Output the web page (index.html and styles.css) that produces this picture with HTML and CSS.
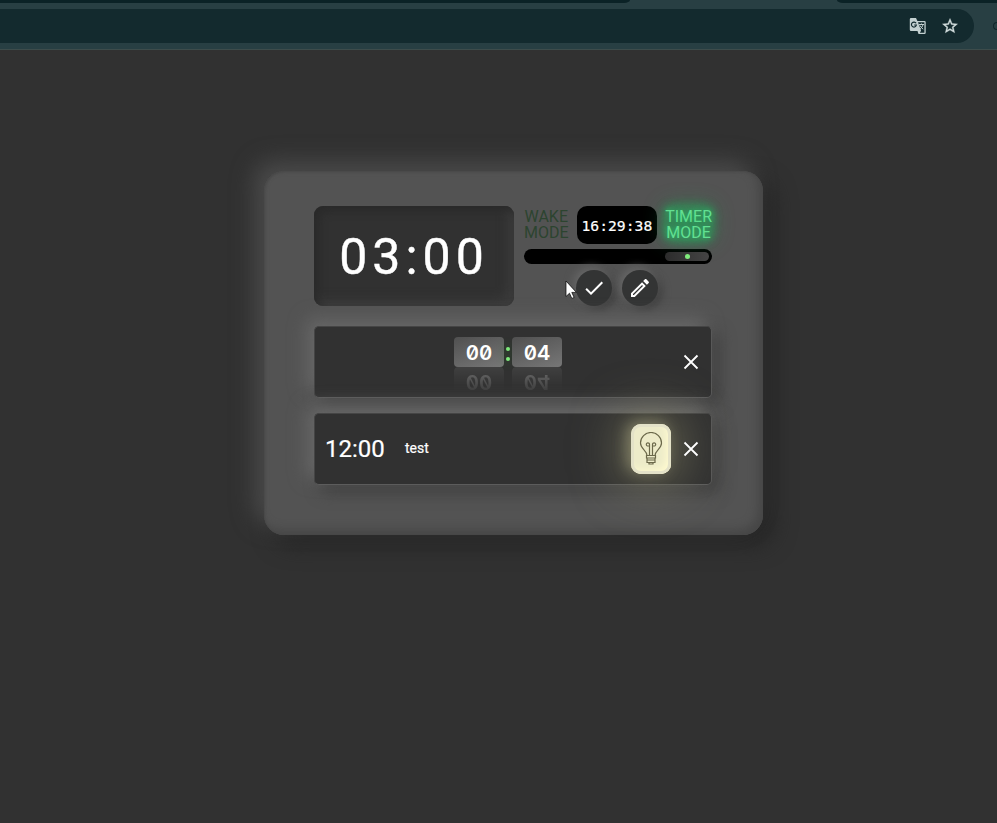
FILE: index.html
```html
<!DOCTYPE html>
<html lang="en">
<head>
<meta charset="utf-8">
<title>Timer</title>
<link rel="stylesheet" href="styles.css">
</head>
<body>
<header class="browser">
  <div class="tabs"><span class="tab-left"></span><span class="tab-gap"></span><span class="tab-right"></span></div>
  <div class="toolbar">
    <div class="omnibox">
      <svg class="ic-translate" viewBox="0 0 18 18"><path d="M1 1h6l1.400 3H15.500a1.200 1.200 0 0 1 1.200 1.200v10.600a1.200 1.200 0 0 1-1.200 1.200H9.500L8.500 14H2a1.200 1.200 0 0 1-1.200-1.200V2.200A1.200 1.200 0 0 1 2 1z" fill="#c3d0d0"/><path d="M9 5.300h6.400v10.400h-4.600l1.300-1.900z" fill="#132a2e"/><path d="M7.100 6.300A2.500 2.500 0 1 0 7.400 8H5.200" fill="none" stroke="#132a2e" stroke-width="1.200"/><path d="M10 7.500h5M12.500 6.500v1M14 7.500c-.4 2-1.600 3.500-3 4.700M11 8.500c.8 1.500 1.800 2.800 3.200 3.700" fill="none" stroke="#c3d0d0"/></svg>
      <svg class="ic-star" viewBox="0 0 24 24"><path d="M22 9.240l-7.190-.62L12 2 9.190 8.630 2 9.240l5.460 4.730L5.820 21 12 17.270 18.180 21l-1.630-7.030L22 9.240zM12 15.400l-3.760 2.270 1-4.280-3.320-2.880 4.380-.38L12 6.100l1.710 4.040 4.380.38-3.320 2.880 1 4.280L12 15.400z" fill="#d2dddd" stroke="#d2dddd" stroke-width=".5"/></svg>
    </div>
    <span class="edge-icon"></span>
  </div>
</header>
<main class="panel">
  <section class="top">
    <div class="display">03:00</div>
    <div class="controls">
      <div class="modes">
        <div class="mode wake">WAKE<br>MODE</div>
        <div class="clock">16:29:38</div>
        <div class="mode timer">TIMER<br>MODE</div>
      </div>
      <div class="slider"><div class="thumb"><i></i></div></div>
      <div class="actions">
        <button class="round" aria-label="Confirm"><svg viewBox="0 0 24 24"><path d="M9 16.170 4.830 12l-1.420 1.410L9 19 21 7l-1.410-1.410z"/></svg></button>
        <button class="round" aria-label="Edit"><svg viewBox="0 0 24 24"><path d="M14.060 9.020l.92.920L5.920 19H5v-.920l9.060-9.060M17.660 3c-.250 0-.510.100-.700.290l-1.830 1.830 3.750 3.750 1.830-1.830c.390-.390.390-1.020 0-1.410l-2.340-2.340c-.200-.200-.450-.290-.710-.290zm-3.600 3.190L3 17.250V21h3.750L17.810 9.940l-3.750-3.750z"/></svg></button>
      </div>
    </div>
  </section>
  <section class="row countdown">
    <div class="flip">
      <div class="unit"><div class="digits">00</div><div class="mirror" aria-hidden="true">00</div></div>
      <div class="colon"><i></i><i></i></div>
      <div class="unit"><div class="digits">04</div><div class="mirror" aria-hidden="true">04</div></div>
    </div>
    <button class="close" aria-label="Remove"><svg viewBox="0 0 16 16"><path d="M1.500 1.500l13 13M14.500 1.500l-13 13"/></svg></button>
  </section>
  <section class="row alarm">
    <span class="time">12:00</span><span class="label">test</span>
    <button class="lamp" aria-label="Toggle"><svg viewBox="0 0 24 34"><path d="M8 23.500C8 18.500 1.500 17 1.500 11a10.500 10.500 0 0 1 21 0c0 6-6.500 7.500-6.500 12.500zM10.500 23V12.500M13.500 23V12.500M10.500 14H9a1.600 1.600 0 1 1 1.500-1.600M13.500 14H15a1.600 1.600 0 1 0-1.500-1.600M7.500 23.500h9v2.500h-9zM8 26h8v4.500H8zM8 28h8M10 30.500v1.500h4v-1.500"/></svg></button>
    <button class="close" aria-label="Remove"><svg viewBox="0 0 16 16"><path d="M1.500 1.500l13 13M14.500 1.500l-13 13"/></svg></button>
  </section>
  <svg class="cursor" viewBox="0 0 12 19"><path d="M1 1v15.500l3.500-3.300 2.300 5.200 2.300-1-2.300-5h4.600z" fill="#fff" stroke="#000" stroke-width=".7"/></svg>
</main>
</body>
</html>
```
FILE: styles.css
```css
* { box-sizing: border-box; }
body { margin: 0; height: 823px; overflow: hidden; background: #313131; font-family: Roboto, sans-serif; color: #fff; }
button { border: 0; padding: 0; display: grid; place-items: center; }
svg { display: block; }
.browser { height: 50px; background: #283f43; border-bottom: 1px solid #3d4c4b; }
.tabs { display: flex; height: 3px; }
.tab-left, .tab-right { background: #0b2226; }
.tab-left { width: 630px; border-bottom-right-radius: 6px 3px; }
.tab-gap { width: 207px; }
.tab-right { flex: 1; border-bottom-left-radius: 6px 3px; }
.toolbar { display: flex; align-items: center; justify-content: space-between; padding-top: 6px; height: 40px; overflow: hidden; }
.omnibox { display: flex; align-items: center; justify-content: flex-end; gap: 14px; width: 974px; height: 34px; padding-right: 15px; background: #132a2e; border-radius: 0 17px 17px 0; }
.ic-translate { width: 18px; height: 18px; }
.ic-star { width: 18px; height: 18px; }
.edge-icon { width: 4px; height: 8px; border: 1px solid #10262a; border-right: 0; border-radius: 4px 0 0 4px; }
.panel { position: relative; width: 499px; height: 364px; margin: 121px 0 0 264px; padding: 35px 50px; border-radius: 20px; background: #535353; box-shadow: -10px -10px 22px #4a4a4a, 10px 10px 22px #252525, inset -5px -5px 10px #464646, inset 1px 1px 2px #494949; }
.top { display: flex; gap: 10px; height: 100px; }
.display { width: 200px; height: 100px; border-radius: 9px; background: #313131; box-shadow: inset 4px 4px 10px #292929, inset -5px -5px 12px #3e3e3e; font-size: 50px; line-height: 103px; letter-spacing: 5px; text-align: center; -webkit-text-stroke: .4px #fff; }
.controls { width: 188px; }
.modes { display: flex; justify-content: space-between; height: 38px; }
.mode { font-size: 16px; line-height: 16px; text-align: center; padding-top: 3px; white-space: nowrap; }
.wake { color: #2c442f; }
.timer { height: 34px; border-radius: 8px; background: #27a75b66; box-shadow: 0 0 8px 2px #27a75b66, 0 0 22px #27a75b77; color: #62e092; text-shadow: 0 0 5px #27b767, 0 0 11px #27b767; }
.clock { width: 80px; height: 38px; border-radius: 10px; background: #000; font: 14.700px/39px "DejaVu Sans Mono", monospace; -webkit-text-stroke: .2px #fff; text-align: center; }
.slider { display: flex; justify-content: flex-end; width: 188px; height: 15px; margin-top: 5px; padding: 3px; border-radius: 8px; background: #000; }
.thumb { display: grid; place-items: center; width: 44px; height: 9px; border-radius: 5px; background: linear-gradient(90deg, #2c2c2c, #444); }
.thumb i { width: 5px; height: 5px; border-radius: 50%; background: #80ec7c; }
.actions { display: flex; gap: 10px; margin: 6px 0 0 52px; }
.round { width: 36px; height: 36px; border-radius: 50%; background: #333434; box-shadow: -3px -3px 8px #666, 4px 4px 8px #404040; }
.round svg { width: 24px; height: 24px; fill: #fff; }
.row { position: relative; display: flex; align-items: center; width: 398px; height: 72px; border: 1px solid #454545; border-right-color: #585858; border-bottom-color: #5c5c5c; border-radius: 5px; background: #313131; box-shadow: -7px -7px 18px #686868, 7px 7px 16px #3e3e3e; }
.countdown { margin-top: 20px; justify-content: flex-end; padding-right: 12px; }
.flip { display: flex; flex: 1; align-self: flex-start; padding: 10px 0 0 139px; }
.unit { width: 50px; }
.digits, .mirror { height: 30px; border-radius: 4px; font: 600 20.500px/32px Inter, sans-serif; font-feature-settings: "zero", "tnum"; text-align: center; }
.digits { background: linear-gradient(160deg, #505050, #777); }
.mirror { transform: scaleY(-1); line-height: 30px; opacity: .3; background: linear-gradient(#31313100, #666); -webkit-mask-image: linear-gradient(transparent, #000); mask-image: linear-gradient(transparent, #000); }
.colon { width: 8px; height: 30px; display: flex; flex-direction: column; align-items: center; gap: 6px; padding-top: 10px; }
.colon i { width: 4px; height: 4px; border-radius: 50%; background: #80ec7c; box-shadow: 0 0 10px #208020; }
.close { width: 16px; height: 16px; background: none; }
.close svg { width: 16px; height: 16px; fill: none; stroke: #fff; stroke-width: 1.800; }
.alarm { margin-top: 15px; padding: 0 12px 0 10px; }
.time { font-size: 24px; width: 80px; -webkit-text-stroke: .2px #fff; }
.label { font-size: 14px; flex: 1; padding-bottom: 2px; -webkit-text-stroke: .2px #fff; }
.lamp { width: 40px; height: 50px; margin-right: 12px; border-radius: 10px; background: #edebc9; box-shadow: inset 0 0 0 3px #e4e2c8, inset -5px -4px 8px #fffbd0, -4px -2px 14px #9a9876aa, 0 0 50px 8px #9a987099; }
.alarm .close { z-index: 1; }
.lamp svg { width: 24px; height: 34px; fill: none; stroke: #6b684a; stroke-width: 1.200; }
.cursor { position: absolute; left: 301px; top: 109px; width: 12px; height: 19px; }
```
